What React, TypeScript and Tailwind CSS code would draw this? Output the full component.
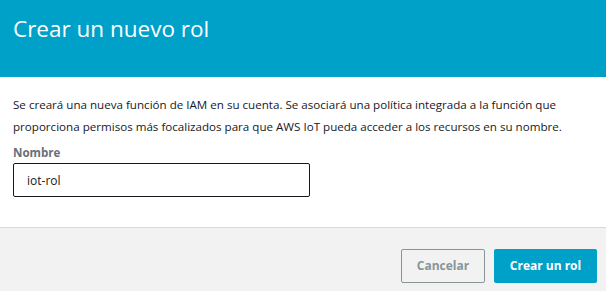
import { useState } from 'react';

export default function App() {
  const [roleName, setRoleName] = useState('iot-rol');

  return (
    <div className="w-[606px] h-[291px] flex flex-col bg-white font-['Open_Sans',sans-serif] text-[#16191f]">
      <div className="h-[77px] shrink-0 bg-[#00a1c9] px-[13px] pt-[14px]">
        <h1 className="text-[22.5px] leading-[30px] text-white">Crear un nuevo rol</h1>
      </div>

      <div className="flex-1 px-[13px] pt-[17px]">
        <p className="text-[11.6px] leading-[22px] text-[#16191f]">
          Se creará una nueva función de IAM en su cuenta. Se asociará una política integrada a la función que
          proporciona permisos más focalizados para que AWS IoT pueda acceder a los recursos en su nombre.
        </p>
        <label className="mt-[6px] block text-[11.6px] font-bold leading-[18px] text-[#687078]">Nombre</label>
        <input
          value={roleName}
          onChange={(e) => setRoleName(e.target.value)}
          className="mt-[1px] block h-[34px] w-[297px] rounded-[2px] border border-[#16191f] px-[13px] text-[12px] text-[#16191f] outline-none"
        />
      </div>

      <div className="h-[64px] shrink-0 border-t border-[#d5dbdb] bg-[#f2f2f2] flex items-start justify-end gap-[9px] pt-[21px] pr-[9px]">
        <button className="h-[34px] w-[84px] rounded-[2px] border border-[#879596] bg-[#f2f2f2] text-[12px] font-bold text-[#879596]">
          Cancelar
        </button>
        <button className="h-[34px] w-[103px] rounded-[2px] bg-[#00a1c9] text-[12px] font-bold text-white">
          Crear un rol
        </button>
      </div>
    </div>
  );
}
